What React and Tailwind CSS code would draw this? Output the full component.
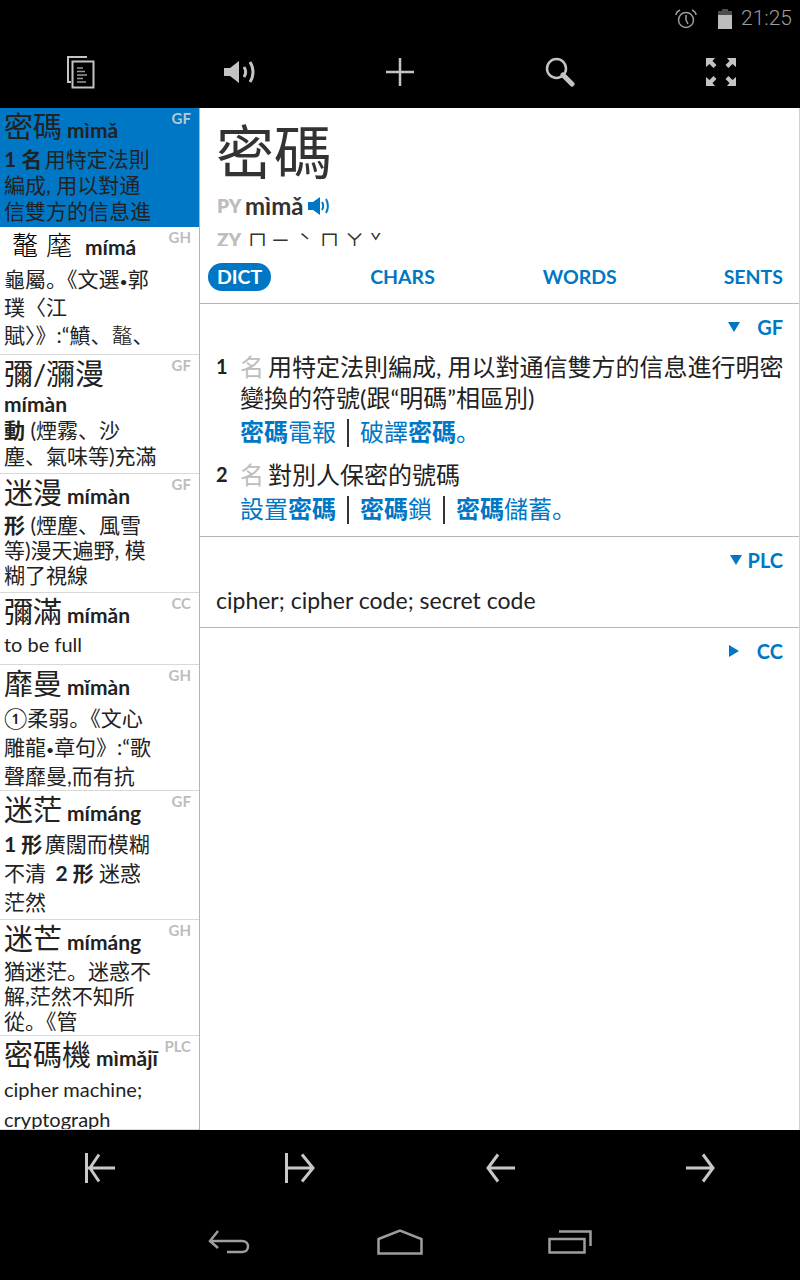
import React from 'react';

const Dot = () => <span className="text-[14px] leading-none">•</span>;

const entries = [
  { head: '密碼', py: 'mìmǎ', src: 'GF', h: 'h-[119px]', lead: 'leading-[26px]', active: true, lines: [<><b className="mr-[-3px]">1 名</b> 用特定法則</>, '編成, 用以對通', '信雙方的信息進'] },
  { head: '鼇麾', py: 'mímá', src: 'GH', h: 'h-[128px]', lead: 'leading-[28px]', thin: true, lines: [<>龜屬。《文選<Dot />郭</>, '璞〈江', <>賦〉》:“鱝、<span className="font-light">鼇</span>、</>] },
  { head: '彌/瀰漫', py: 'mímàn', src: 'GF', h: 'h-[119px]', lead: 'leading-[26px]', stack: true, lines: [<><b>動</b> (煙霧、沙</>, '塵、氣味等)充滿'] },
  { head: '迷漫', py: 'mímàn', src: 'GF', h: 'h-[119px]', lead: 'leading-[25px]', lines: [<><b>形</b> (煙塵、風雪</>, '等)漫天遍野, 模', '糊了視線'] },
  { head: '彌滿', py: 'mímǎn', src: 'CC', h: 'h-[72px]', lead: 'leading-[26px]', latin: true, lines: ['to be full'] },
  { head: '靡曼', py: 'mǐmàn', src: 'GH', h: 'h-[126px]', lead: 'leading-[29px]', lines: ['①柔弱。《文心', <>雕龍<Dot />章句》:“歌</>, '聲靡曼,而有抗'] },
  { head: '迷茫', py: 'mímáng', src: 'GF', h: 'h-[129px]', lead: 'leading-[29px]', lines: [<><b className="mr-[-3px]">1 形</b> 廣闊而模糊</>, <>不清 <b className="ml-1">2 形</b> 迷惑</>, '茫然'] },
  { head: '迷芒', py: 'mímáng', src: 'GH', h: 'h-[116px]', lead: 'leading-[25px]', lines: ['猶迷茫。迷惑不', '解,茫然不知所', '從。《管'] },
  { head: '密碼機', py: 'mìmǎjī', src: 'PLC', h: 'h-[94px]', lead: 'leading-[30px]', latin: true, lines: ['cipher machine;', 'cryptograph'] },
];

const Entry = ({ e }) => (
  <div className={`relative shrink-0 overflow-hidden border-b px-1 ${e.h} ${e.active ? 'bg-[#0077c5] border-[#0077c5]' : 'bg-white border-[#d8d8d8]'}`}>
    <span className={`absolute right-2 top-px text-[15px] font-bold leading-[18px] ${e.active ? 'text-[#b4c9d8]' : 'text-[#bdbdbd]'}`}>{e.src}</span>
    {e.stack ? (
      <>
        <div className="h-[37px] text-[29px] leading-[37px] text-[#222]">{e.head}</div>
        <div className="h-[24px] text-[21px] font-bold leading-[24px] text-[#222]">{e.py}</div>
      </>
    ) : (
      <div className="flex h-[37px] items-baseline gap-[5px] text-[#222]">
        <span className={`leading-[37px] ${e.thin ? 'pl-[8px] text-[26px] font-light tracking-[8px] text-black' : 'text-[29px]'}`}>{e.head}</span>
        <span className="text-[21px] font-bold leading-[37px]">{e.py}</span>
      </div>
    )}
    <div className={`mt-[1px] text-[#222] ${e.latin ? 'text-[20px]' : 'text-[21px]'} ${e.lead}`}>
      {e.lines.map((l, i) => <div key={i} className="whitespace-nowrap">{l}</div>)}
    </div>
  </div>
);

const Sep = () => <span className="mx-[11px] inline-block h-[28px] w-[2px] translate-y-[6px] bg-[#333]" />;

const SourceHead = ({ name, open, wide }) => (
  <div className="flex h-[46px] items-center justify-end pr-4 text-[20px] font-bold text-[#0077c5]">
    <svg width="12" height="12" viewBox="0 0 12 12" className={wide ? 'mr-[6px]' : 'mr-[17px]'}>
      <path d={open ? 'M0 1h12L6 11z' : 'M1 0l10 6-10 6z'} fill="#0077c5" />
    </svg>
    <span>{name}</span>
  </div>
);

const TopIcons = () => [
  <svg key="copy" width="30" height="34" viewBox="0 0 30 34" fill="none" stroke="#c4c4c4" className="translate-x-px">
    <path d="M21 2H2v25h3" strokeWidth="2" />
    <rect x="6.5" y="6.5" width="21" height="26" strokeWidth="2" />
    <path d="M11 13h6M11 16.5h8M11 20h10M11 23.5h6M11 27h9" strokeWidth="1.5" stroke="#999" />
  </svg>,
  <svg key="sound" width="34" height="26" viewBox="0 0 34 26" fill="none">
    <path d="M1 9h6l9-7v22l-9-7H1z" fill="#c4c4c4" />
    <path d="M21 8c2 3 2 7 0 10M27 3c4 6 4 14 0 20" stroke="#c4c4c4" strokeWidth="3" />
  </svg>,
  <svg key="add" width="28" height="28" viewBox="0 0 28 28" stroke="#c4c4c4" strokeWidth="2.5"><path d="M14 0v28M0 14h28" /></svg>,
  <svg key="search" width="30" height="30" viewBox="0 0 30 30" fill="none">
    <circle cx="11.5" cy="11.5" r="9.5" stroke="#c4c4c4" strokeWidth="2.5" />
    <path d="M18 18l9 9" stroke="#c4c4c4" strokeWidth="5" strokeLinecap="round" />
  </svg>,
  <svg key="full" width="30" height="28" viewBox="0 0 30 28" fill="#c4c4c4" className="translate-x-px">
    <path d="M0 0h9L6.500 3l4 4-3 3-4-4L0 9zM30 0h-9l2.500 3-4 4 3 3 4-4L30 9zM0 28h9l-2.500-3 4-4-3-3-4 4L0 19zM30 28h-9l2.500-3-4-4 3-3 4 4 3.500-3z" />
  </svg>,
];

const Arrow = ({ dir, bar }) => (
  <svg width="32" height="30" viewBox="0 0 32 30" fill="none" stroke="#c8c8c8" strokeWidth="3" className={bar || dir === 'right' ? 'translate-x-px' : ''}>
    {dir === 'left' && <path d={bar ? 'M3 15h27M14 1.500L5 15l9 13.500' : 'M4 15h27M14 1.500L4 15l10 13.500'} />}
    {dir === 'right' && <path d={bar ? 'M2 15h27M17 1.500L28 15 17 28.500' : 'M1 15h27M18 1.500L28 15 18 28.500'} />}
    {bar && <path d="M1.500 0v30" />}
  </svg>
);

export default function App() {
  return (
    <div className="flex h-[1280px] w-[800px] flex-col overflow-hidden bg-black font-['Lato','Noto_Sans_CJK_SC',sans-serif]">
      {/* status bar */}
      <div className="flex h-[36px] items-center justify-end pr-2 pt-[1px] text-[#9c9c9c]">
        <svg width="22" height="20" viewBox="0 0 22 20" fill="none" stroke="#9c9c9c" strokeWidth="1.500">
          <circle cx="11" cy="11" r="7.500" />
          <path d="M11 6v5l2 4M1 6c0-2 2-4 4-5M21 6c0-2-2-4-4-5" />
        </svg>
        <svg width="14" height="20" viewBox="0 0 14 20" className="ml-[21px]">
          <path d="M4 0h6v2h4v18H0V2h4z" fill="#4d4d4d" />
          <path d="M0 6h14v14H0z" fill="#bdbdbd" />
        </svg>
        <span className="ml-[9px] font-['Roboto'] text-[21px] font-light leading-none">21:25</span>
      </div>
      {/* action bar */}
      <div className="grid h-[72px] grid-cols-5 place-items-center pb-[1px]">
        {TopIcons()}
      </div>

      <div className="flex h-[1022px]">
        {/* result list */}
        <div className="flex w-[200px] shrink-0 flex-col overflow-hidden border-r border-[#b5b5b5] bg-white">
          {entries.map((e) => <Entry key={e.py + e.src} e={e} />)}
        </div>

        {/* detail */}
        <div className="min-w-0 flex-1 border-r border-[#d0d0d0] bg-white text-[#222]">
          <div className="h-[196px] border-b border-[#b5b5b5]">
            <div className="pl-[16px] pt-[11px] text-[58px] leading-[66px] text-[#333]">密碼</div>
            <div className="mt-[5px] flex h-[32px] items-center pl-[17px]">
              <span className="mr-[5px] w-[23px] text-[19px] font-extrabold text-[#bdbdbd]">PY</span>
              <span className="text-[24px] font-bold leading-[32px] text-[#333]">mìmǎ</span>
              <svg width="22" height="20" viewBox="0 0 22 20" fill="none" className="ml-[5px]">
                <path d="M0 6h5l7-5v18l-7-5H0z" fill="#0077c5" />
                <path d="M14 6c1.500 2.500 1.500 5.500 0 8M18 3c2.500 4 2.500 10 0 14" stroke="#0077c5" strokeWidth="2" />
              </svg>
            </div>
            {/* the zhuyin row is clipped by the tab strip in the reference */}
            <div className="flex h-[24px] overflow-hidden pl-[17px] pt-[6px] font-['Noto_Sans_CJK_TC'] text-[19px] leading-[24px] text-[#333]">
              <span className="w-[31px] font-['Lato'] font-extrabold text-[#bdbdbd]">ZY</span>
              <span className="w-[23px]">ㄇ</span>
              <span className="w-[28px]">ㄧ</span>
              <span className="w-[21px] translate-y-[1px]">ˋ</span>
              <span className="w-[25px]">ㄇ</span>
              <span className="w-[25px]">ㄚ</span>
              <span className="translate-y-[1px]">ˇ</span>
            </div>
            <div className="mt-[17px] flex items-center justify-between pl-[8px] pr-[16px] text-[19.500px] font-bold leading-[28px] text-[#0077c5]">
              <span className="rounded-full bg-[#0077c5] px-[9px] text-white">DICT</span>
              <span className="mr-[9px]">CHARS</span>
              <span className="mr-[8px]">WORDS</span>
              <span>SENTS</span>
            </div>
          </div>

          <div className="h-[233px] border-b border-[#b5b5b5]">
            <SourceHead name="GF" open />
            <div className="pl-[16px] pr-[12px] pt-[1px] text-[24px] leading-[31px]">
              <div className="flex">
                <b className="w-[24px] shrink-0 text-[20px]">1</b>
                <div>
                  <span className="mr-[4px] text-[#bdbdbd]">名</span>用特定法則編成, 用以對通信雙方的信息進行明密變換的符號(跟“明碼”相區別)
                  <div className="text-[#0077c5]"><b>密碼</b>電報<Sep />破譯<b>密碼</b>。</div>
                </div>
              </div>
              <div className="mt-[12px] flex">
                <b className="w-[24px] shrink-0 text-[20px]">2</b>
                <div>
                  <span className="mr-[4px] text-[#bdbdbd]">名</span>對別人保密的號碼
                  <div className="text-[#0077c5]">設置<b>密碼</b><Sep /><b>密碼</b>鎖<Sep /><b>密碼</b>儲蓄。</div>
                </div>
              </div>
            </div>
          </div>

          <div className="h-[91px] border-b border-[#b5b5b5]">
            <SourceHead name="PLC" open wide />
            <div className="pl-[16px] text-[23px] leading-[34px]">cipher; cipher code; secret code</div>
          </div>

          <SourceHead name="CC" />
        </div>
      </div>

      {/* pager */}
      <div className="grid h-[76px] grid-cols-4 place-items-center">
        <Arrow dir="left" bar />
        <Arrow dir="right" bar />
        <Arrow dir="left" />
        <Arrow dir="right" />
      </div>
      {/* android nav */}
      <div className="mx-auto grid h-[74px] w-[510px] grid-cols-3 place-items-center pb-[2px]">
        <svg width="44" height="24" viewBox="0 0 44 24" fill="none" stroke="#9e9e9e" strokeWidth="2.500">
          <path d="M10 1L2 11l8 7M2 11h32c8 0 8 11 0 11H19" />
        </svg>
        <svg width="46" height="26" viewBox="0 0 46 26" fill="none" stroke="#9e9e9e" strokeWidth="2.500">
          <path d="M1.500 10L23 1.500 44.500 10v14.500h-43z" />
        </svg>
        <svg width="44" height="24" viewBox="0 0 44 24" fill="none" stroke="#9e9e9e" strokeWidth="2.500">
          <rect x="1.500" y="9" width="35" height="13.500" />
          <path d="M11 1.500h31.500V16" />
        </svg>
      </div>
    </div>
  );
}
